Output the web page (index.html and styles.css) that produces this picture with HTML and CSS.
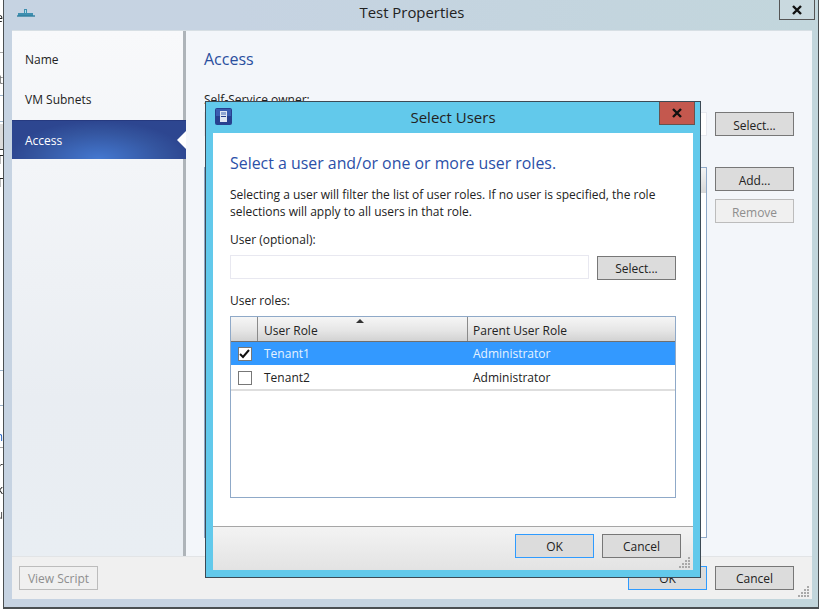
FILE: index.html
```html
<!DOCTYPE html>
<html lang="en">
<head>
<meta charset="utf-8">
<title>Test Properties</title>
<link rel="stylesheet" href="styles.css">
</head>
<body>
<div class="desktop">
  <aside class="sliver">
    <span class="frag f1">e</span>
    <span class="rule r1"></span>
    <span class="frag f2">t</span>
    <span class="rule r2"></span>
    <span class="rule r3"></span>
    <span class="shade"></span>
    <span class="frag f3">T</span>
    <span class="frag f4">T</span>
    <span class="rule r4"></span>
    <span class="rule r5"></span>
    <span class="frag f5">n</span>
    <span class="rule r6"></span>
    <span class="frag f6">r</span>
    <span class="frag f7">k</span>
    <span class="frag f8">u</span>
  </aside>
  <section class="window">
    <header class="titlebar">
      <svg class="app-icon" width="18" height="12" viewBox="0 0 18 12"><path d="M7 1h3v4h6v3H1V5h6z" fill="#3f8fb0"/><path d="M0 7h18v2H0z" fill="#2f7f9f" opacity=".7"/><path d="M8 2h1v3H8z" fill="#a8e0ea"/></svg>
      <h1 class="window-title">Test Properties</h1>
      <button class="close-plain" type="button"><svg width="12" height="10" viewBox="0 0 12 10"><path d="M2 1l8 8M10 1L2 9" stroke="#111" stroke-width="2.4"/></svg></button>
    </header>
    <div class="window-body">
      <div class="columns">
        <nav class="sidebar">
          <a class="nav-item">Name</a>
          <a class="nav-item">VM Subnets</a>
          <a class="nav-item active">Access</a>
        </nav>
        <main class="panel">
          <div class="panel-text">
            <h2 class="heading">Access</h2>
            <label class="owner-label">Self-Service owner:</label>
            <div class="field"></div>
            <div class="bg-list"><div class="bg-list-head"></div></div>
          </div>
          <div class="panel-actions">
            <button class="btn" type="button">Select...</button>
            <button class="btn add" type="button">Add...</button>
            <button class="btn disabled" type="button">Remove</button>
          </div>
        </main>
      </div>
      <footer class="footer">
        <button class="btn disabled" type="button">View Script</button>
        <div class="footer-right">
          <button class="btn primary" type="button">OK</button>
          <button class="btn" type="button">Cancel</button>
        </div>
        <svg class="grip" width="12" height="12" viewBox="0 0 12 12"><path d="M9 1h2v2H9zM6 4h2v2H6zM9 4h2v2H9zM3 7h2v2H3zM6 7h2v2H6zM9 7h2v2H9zM0 10h2v2H0zM3 10h2v2H3zM6 10h2v2H6zM9 10h2v2H9z" fill="#a9a9a9"/></svg>
      </footer>
    </div>
  </section>

  <section class="dialog">
    <header class="dialog-titlebar">
      <svg class="dialog-icon" width="17" height="17" viewBox="0 0 17 17"><rect width="17" height="17" rx="2" fill="#27408f"/><rect x="1" y="1" width="15" height="7" fill="#3a5cb0"/><rect x="5" y="3" width="7" height="11" fill="#dfe6f2"/><path d="M6 8h5v1H6z" fill="#27408f"/><path d="M6 4h5v3H6z" fill="#8fa5d2"/></svg>
      <h1 class="dialog-title">Select Users</h1>
      <button class="close-red" type="button"><svg width="12" height="10" viewBox="0 0 12 10"><path d="M2 1l8 8M10 1L2 9" stroke="#111" stroke-width="2.4"/></svg></button>
    </header>
    <div class="dialog-body">
      <div class="dialog-content">
        <h2 class="dialog-heading">Select a user and/or one or more user roles.</h2>
        <p class="help">Selecting a user will filter the list of user roles. If no user is specified, the role selections will apply to all users in that role.</p>
        <label class="field-label">User (optional):</label>
        <div class="user-row">
          <div class="user-input"></div>
          <button class="btn" type="button">Select...</button>
        </div>
        <label class="roles-label">User roles:</label>
        <div class="grid">
          <div class="row head">
            <div class="cell check"></div>
            <div class="cell role sorted">User Role<span class="sort"></span></div>
            <div class="cell parent">Parent User Role</div>
          </div>
          <div class="row selected">
            <div class="cell check"><span class="box"><svg width="11" height="10" viewBox="0 0 11 10"><path d="M1 5l3 3 6-7" fill="none" stroke="#111" stroke-width="2"/></svg></span></div>
            <div class="cell role">Tenant1</div>
            <div class="cell parent">Administrator</div>
          </div>
          <div class="row last">
            <div class="cell check"><span class="box"></span></div>
            <div class="cell role">Tenant2</div>
            <div class="cell parent">Administrator</div>
          </div>
        </div>
      </div>
      <footer class="dialog-footer">
        <button class="btn primary" type="button">OK</button>
        <button class="btn" type="button">Cancel</button>
        <svg class="grip" width="12" height="12" viewBox="0 0 12 12"><path d="M9 1h2v2H9zM6 4h2v2H6zM9 4h2v2H9zM3 7h2v2H3zM6 7h2v2H6zM9 7h2v2H9zM0 10h2v2H0zM3 10h2v2H3zM6 10h2v2H6zM9 10h2v2H9z" fill="#a9a9a9"/></svg>
      </footer>
    </div>
  </section>
</div>
</body>
</html>
```
FILE: styles.css
```css
* { box-sizing: border-box; }
html, body { margin: 0; padding: 0; }
body { width: 822px; height: 612px; overflow: hidden; background: #fff; font-family: "Open Sans", "Noto Sans", sans-serif; font-size: 12px; color: #222; }
h1, h2, p { margin: 0; font-weight: 400; }
.desktop { position: relative; width: 822px; height: 612px; filter: blur(0.35px); }

.sliver { position: absolute; left: 0; top: 0; width: 3px; height: 612px; overflow: hidden; }
.frag { position: absolute; right: 0; line-height: 14px; color: #222; }
.f1 { top: 11px; }
.f2 { top: 73px; color: #777; }
.f3 { top: 153px; }
.f4 { top: 176px; }
.f5 { top: 430px; color: #1f5fc0; }
.f6 { top: 460px; }
.f7 { top: 483px; }
.f8 { top: 508px; color: #555; }
.rule { position: absolute; left: 0; width: 3px; height: 1px; background: #9db4cc; }
.r1 { top: 52px; background: #aaa; }
.r2 { top: 95px; }
.r3 { top: 121px; }
.r4 { top: 370px; }
.r5 { top: 405px; }
.r6 { top: 447px; background: #aaa; }
.shade { position: absolute; left: 0; top: 124px; width: 3px; height: 26px; background: #dcdcdc; border-bottom: 1px solid #333; }

.window { position: absolute; left: 3px; top: -4px; width: 816px; height: 613px; border: 1px solid #4a4f52; border-top: 0; border-bottom-width: 2px; background: linear-gradient(90deg, #c6d3e2 0, #c6d3e2 28%, #c2d6dc 100%); padding: 0 6px 8px 8px; display: flex; flex-direction: column; }
.titlebar { height: 34px; position: relative; display: flex; align-items: center; justify-content: center; flex: none; padding-bottom: 3px; }
.app-icon { position: absolute; left: 5px; top: 12px; }
.window-title { font-size: 14.9px; color: #222; }
.close-plain { position: absolute; right: -3px; top: 0; width: 36px; height: 24px; border: 1px solid #555; background: #c9d9df; padding: 3px 0 0; display: flex; justify-content: center; align-items: center; }
.window-body { flex: 1; display: flex; flex-direction: column; min-height: 0; }
.columns { flex: 1; display: flex; min-height: 0; border-top: 1px solid #d7dfe4; }
.sidebar { width: 174px; flex: none; padding-top: 8px; background: linear-gradient(180deg, #f8f9fb 0, #f3f5f8 25%, #e9edf2 70%, #e9eef3 100%); border-right: 3px solid #aeb4b9; display: flex; flex-direction: column; }
.nav-item { height: 40.5px; display: flex; align-items: center; padding-left: 13px; color: #222; margin-right: -3px; position: relative; }
.nav-item.active { height: 39px; color: #fff; background: radial-gradient(ellipse 90px 38px at 50% 100%, #4478d0 0, #34559f 70%, #2d4690 100%); border-top: 1px solid #263a80; }
.nav-item.active::after { content: ""; position: absolute; right: 0; top: 10px; border: 9px solid transparent; border-left: 0; border-right-color: #fff; }
.panel { flex: 1; background: #f3f6fa; display: flex; padding: 0 18px 18px 18px; min-width: 0; }
.panel-text { flex: 1; min-width: 0; display: flex; flex-direction: column; }
.heading { font-size: 16px; color: #2a4f9e; margin-top: 16px; line-height: 24px; }
.owner-label { margin-top: 20px; line-height: 18px; }
.field { margin-top: 3px; height: 24px; flex: none; border: 1px solid #e7e9ef; background: #fff; }
.bg-list { margin-top: 31px; flex: 1; border: 1px solid #8fa9c8; background: #fff; }
.bg-list-head { height: 25px; background: linear-gradient(180deg, #f4f4f4, #d8d8d8); }
.panel-actions { width: 79px; margin-left: 8px; flex: none; display: flex; flex-direction: column; padding-top: 81px; }
.panel-actions .btn { padding-top: 2px; }
.add { margin-top: 31px; margin-bottom: 8px; }

.btn { width: 79px; height: 24px; flex: none; border: 1px solid #777; background: #dcdcdc; font: inherit; font-size: 12px; color: #222; padding: 0; }
.btn.disabled { background: #f0f0f0; border-color: #bcbcbc; color: #8e8e8e; }
.btn.primary { border-color: #2f9bff; }
.footer { height: 43px; flex: none; position: relative; background: #f0f0f0; border-top: 1px solid #e2e4e6; display: flex; justify-content: space-between; padding: 9px 18px 0 7px; }
.footer-right { display: flex; gap: 8px; }
.grip { position: absolute; right: 2px; bottom: 2px; }

.dialog { position: absolute; left: 205px; top: 101px; width: 496px; height: 477px; border: 1px solid #3c4a55; background: #62c9eb; padding: 31px 7px 7px 7px; }
.dialog-titlebar { position: absolute; left: 0; top: 0; right: 0; height: 31px; padding-bottom: 2px; display: flex; justify-content: center; align-items: center; }
.dialog-icon { position: absolute; left: 9px; top: 6px; }
.dialog-title { font-size: 15px; color: #222; }
.close-red { position: absolute; right: 5px; top: 0; width: 36px; height: 23px; background: #c4584e; border: 1px solid #66534f; border-top: 0; padding: 0; display: flex; justify-content: center; align-items: center; }
.dialog-body { height: 100%; background: #fff; display: flex; flex-direction: column; }
.dialog-content { flex: 1; padding: 18px 17px 0 17px; min-height: 0; }
.dialog-heading { font-size: 15.9px; line-height: 24px; color: #2b50a8; }
.help { margin-top: 11px; line-height: 17px; width: 440px; }
.field-label { display: block; margin-top: 11px; line-height: 18px; }
.user-row { margin-top: 6px; display: flex; gap: 8px; align-items: flex-start; }
.user-input { width: 359px; height: 24px; border: 1px solid #e8e8f0; background: #fff; }
.user-row .btn { margin-top: 1px; }
.roles-label { display: block; margin-top: 12px; line-height: 18px; }
.grid { margin-top: 6px; height: 182px; border: 1px solid #8fa9c8; }
.row { display: flex; height: 24px; align-items: stretch; }
.cell { display: flex; align-items: center; }
.check { width: 27px; justify-content: center; }
.role { width: 210px; padding-left: 6px; }
.parent { flex: 1; padding-left: 5px; }
.head { height: 25px; background: linear-gradient(180deg, #f6f6f6 0, #e6e6e6 55%, #d2d2d2 100%); border-bottom: 1px solid #6f6f6f; }
.head .cell { border-right: 1px solid #8a8a8a; padding-top: 3px; }
.head .parent { border-right: 0; }
.sorted { position: relative; }
.sort { position: absolute; left: 98px; top: 2px; border: 4px solid transparent; border-top: 0; border-bottom-color: #333; }
.selected { background: #3399ff; color: #e6f3ff; border-bottom: 1px solid #fff; }
.last { border-bottom: 2px solid #dedede; height: 25px; }
.box { width: 14px; height: 14px; border: 1px solid #777; background: #fff; display: flex; align-items: center; justify-content: center; }
.dialog-footer { height: 44px; flex: none; position: relative; background: linear-gradient(180deg, #f3f3f3 0, #e3e3e3 100%); border-top: 1px solid #a6a6a6; display: flex; justify-content: flex-end; gap: 8px; padding: 7px 12px 0 0; }
```
